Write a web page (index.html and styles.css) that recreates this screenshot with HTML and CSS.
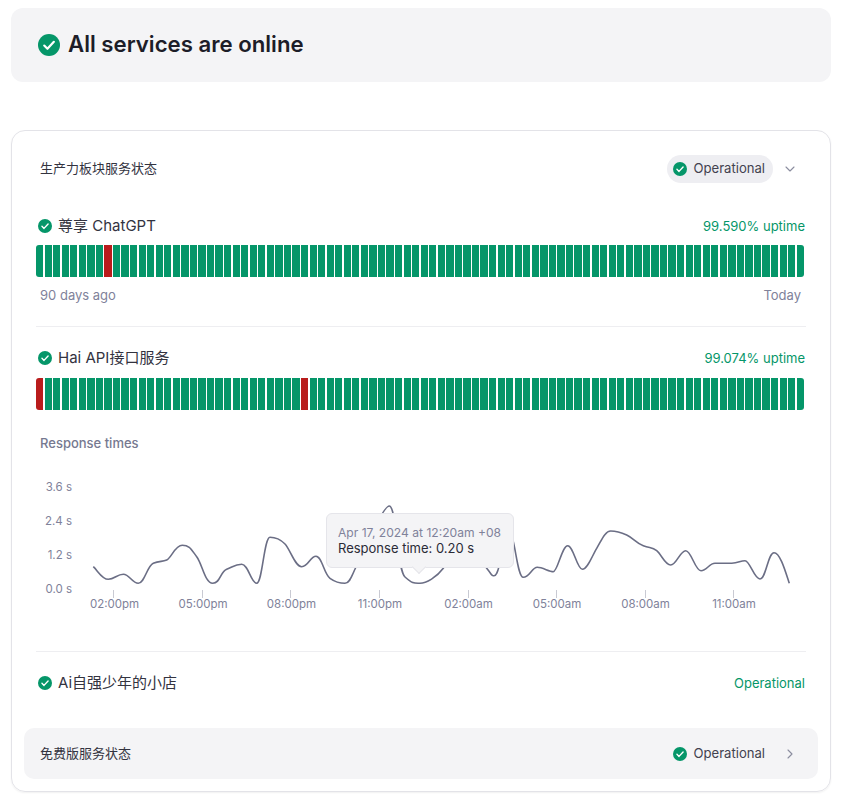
FILE: index.html
```html
<!doctype html>
<html lang="zh">
<head>
<meta charset="utf-8">
<title>Status</title>
<link rel="stylesheet" href="styles.css">
</head>
<body>
<svg class="defs" width="0" height="0">
	<symbol id="ok" viewBox="0 0 24 24">
		<circle cx="12" cy="12" r="12" fill="#059669"/>
		<path d="M6.8 12.6l3.5 3.5 7-7.6" fill="none" stroke="#fff" stroke-width="2.4" stroke-linecap="round" stroke-linejoin="round"/>
	</symbol>
</svg>

<div class="page">
	<div class="banner">
		<svg class="icon-lg"><use href="#ok"/></svg>
		<h1>All services are online</h1>
	</div>

	<div class="card">
		<div class="group-head">
			<span class="group-name">生产力板块服务状态</span>
			<span class="pill"><svg class="icon"><use href="#ok"/></svg><span class="status-text">Operational</span></span>
			<svg class="chev" viewBox="0 0 10 10"><path d="M1 3l4 4 4-4"/></svg>
		</div>

		<div class="service first">
			<div class="service-head">
				<span class="service-name"><svg class="icon"><use href="#ok"/></svg>尊享 ChatGPT</span>
				<span class="uptime">99.590% uptime</span>
			</div>
			<div class="bars">
				<i></i><i></i><i></i><i></i><i></i><i></i><i></i><i></i><i class="down"></i><i></i>
				<i></i><i></i><i></i><i></i><i></i><i></i><i></i><i></i><i></i><i></i>
				<i></i><i></i><i></i><i></i><i></i><i></i><i></i><i></i><i></i><i></i>
				<i></i><i></i><i></i><i></i><i></i><i></i><i></i><i></i><i></i><i></i>
				<i></i><i></i><i></i><i></i><i></i><i></i><i></i><i></i><i></i><i></i>
				<i></i><i></i><i></i><i></i><i></i><i></i><i></i><i></i><i></i><i></i>
				<i></i><i></i><i></i><i></i><i></i><i></i><i></i><i></i><i></i><i></i>
				<i></i><i></i><i></i><i></i><i></i><i></i><i></i><i></i><i></i><i></i>
				<i></i><i></i><i></i><i></i><i></i><i></i><i></i><i></i><i></i><i></i>
			</div>
			<div class="bars-foot"><span>90 days ago</span><span>Today</span></div>
		</div>

		<div class="service second">
			<div class="service-head">
				<span class="service-name"><svg class="icon"><use href="#ok"/></svg>Hai API接口服务</span>
				<span class="uptime">99.074% uptime</span>
			</div>
			<div class="bars">
				<i class="down"></i><i></i><i></i><i></i><i></i><i></i><i></i><i></i><i></i><i></i>
				<i></i><i></i><i></i><i></i><i></i><i></i><i></i><i></i><i></i><i></i>
				<i></i><i></i><i></i><i></i><i></i><i></i><i></i><i></i><i></i><i></i>
				<i></i><i class="down"></i><i></i><i></i><i></i><i></i><i></i><i></i><i></i><i></i>
				<i></i><i></i><i></i><i></i><i></i><i></i><i></i><i></i><i></i><i></i>
				<i></i><i></i><i></i><i></i><i></i><i></i><i></i><i></i><i></i><i></i>
				<i></i><i></i><i></i><i></i><i></i><i></i><i></i><i></i><i></i><i></i>
				<i></i><i></i><i></i><i></i><i></i><i></i><i></i><i></i><i></i><i></i>
				<i></i><i></i><i></i><i></i><i></i><i></i><i></i><i></i><i></i><i></i>
			</div>
			<div class="chart-title">Response times</div>
			<div class="chart">
				<svg viewBox="36 470 770 140" width="770" height="140">
					<g class="y-labels">
						<text x="72" y="491">3.6 s</text>
						<text x="72" y="525">2.4 s</text>
						<text x="72" y="559">1.2 s</text>
						<text x="72" y="593">0.0 s</text>
					</g>
					<path class="ticks" d="M113.5 590v8M202.5 590v8M290.5 590v8M379.5 590v8M468.5 590v8M556.5 590v8M645.5 590v8M733.5 590v8"/>
					<g class="x-labels">
						<text x="114.5" y="608">02:00pm</text>
						<text x="203" y="608">05:00pm</text>
						<text x="291.5" y="608">08:00pm</text>
						<text x="380" y="608">11:00pm</text>
						<text x="468.5" y="608">02:00am</text>
						<text x="557" y="608">05:00am</text>
						<text x="645.5" y="608">08:00am</text>
						<text x="734" y="608">11:00am</text>
					</g>
					<path class="line" d="M93.3 566.7C98 571 102 579.3 108.3 579.3S117 574.3 123.3 574.3S132 583.3 138.3 583.3S147 566 153.3 563.3S162 562 166.7 560S175 545.3 182.3 545.3S191 549 196.7 556.7S205 583.3 212.7 583.3S220 572 226.7 569.3S235 564.3 241.7 564.3S251 583.3 256.7 583.3S264 537.3 270 537.3S280 539 285 544S295 566.7 301.7 566.7S310 556.3 316 556.3S324 574 330 578.3S340 583.3 345 583.3S352 575 356 567S382 506 389.3 506S397 570 405 577S414 583.3 420 583.3S437 577 443.3 568.3S452 540 460 540S480 560 486.7 568.3S491 575.7 494 575.7S498 570 500 563S505 535 510 535S517 577.3 523.3 577.3S532 567.3 537.3 567.3S549 571.7 553.3 571.7S562 545.7 567.7 545.7S577 569.3 582.3 569.3S592 556 596.7 548.3S605 531 610.7 531S620 532 626.7 535S636 543 643.3 545.7S652 547 656.7 550.7S665 565 670.7 565S680 550.7 685.7 550.7S695 570.7 701 570.7S709 563.3 715 563.3S725 563.3 731.7 563.3S740 560.7 745 560.7S754 579 760 579S768 552.7 774 552.7S785 570 789.3 583.3"/>
				</svg>
				<div class="tooltip">
					<div class="tooltip-date">Apr 17, 2024 at 12:20am +08</div>
					<div class="tooltip-value">Response time: 0.20 s</div>
				</div>
			</div>
		</div>

		<div class="service third">
			<div class="service-head">
				<span class="service-name"><svg class="icon"><use href="#ok"/></svg>Ai自强少年的小店</span>
				<span class="uptime">Operational</span>
			</div>
		</div>

		<div class="group-foot">
			<span class="group-name">免费版服务状态</span>
			<span class="foot-status"><svg class="icon"><use href="#ok"/></svg><span class="status-text">Operational</span></span>
			<svg class="chev" viewBox="0 0 10 10"><path d="M3 1l4 4-4 4"/></svg>
		</div>
	</div>
</div>
</body>
</html>
```

FILE: styles.css
```css
* { margin:0; padding:0; box-sizing:border-box; }
body { background:#fff; color:#2b2b36; font-family:Inter, "Noto Sans CJK SC", sans-serif; font-size:14px; }
.defs { position:absolute; }
svg { display:block; flex:none; }

.page { width:820px; margin-left:11px; padding:8px 0 5px; }

.banner { height:74px; display:flex; align-items:center; gap:8px; padding:0 27px; background:#f4f4f6; border-radius:12px; margin-bottom:48px; }
.banner h1 { font-size:22.2px; font-weight:600; line-height:26px; margin-bottom:2px; color:#1d1d28; }
.icon-lg { width:22px; height:22px; }
.icon { width:14px; height:14px; }

.card { height:662px; padding:24px 12px 0; border:1px solid #e3e3e8; border-radius:14px; box-shadow:0 1px 2px rgba(0,0,0,.06); }

.group-head { display:flex; align-items:center; height:28px; padding:0 23px 0 16px; }
.group-name { flex:1; font-size:13px; line-height:18px; margin-bottom:3px; color:#33333f; }
.group-foot .group-name { margin-bottom:1px; }
.pill { display:flex; align-items:center; gap:6px; height:28px; padding:0 8px 0 6px; border-radius:14px; background:#eeeef2; font-size:13px; line-height:16px; color:#42424f; }
.status-text { margin-bottom:2px; font-size:13.1px; }
.chev { width:10px; height:10px; margin-left:12px; fill:none; stroke:#8b8d9f; stroke-width:1.1; stroke-linecap:round; stroke-linejoin:round; }

.service { margin:0 0 0 12px; width:770px; }
.service.first { margin-top:33px; height:111px; border-bottom:1px solid #eeeef1; }
.service.second { margin-top:21px; height:304px; border-bottom:1px solid #eeeef1; }
.service.third { margin-top:21px; }

.service-head { display:flex; justify-content:space-between; align-items:center; height:20px; padding-left:2px; padding-right:1px; }
.service-name { display:flex; align-items:center; gap:6px; font-size:15px; line-height:18px; color:#33333f; }
.uptime { font-size:13px; color:#059669; }

.bars { display:flex; gap:1.3px; width:768.6px; height:32px; margin-top:9px; }
.second .bars { margin-top:10px; }
.bars i { flex:1; background:#059669; }
.bars i:first-child { border-radius:3px 0 0 3px; }
.bars i:last-child { border-radius:0 3px 3px 0; }
.bars .down { background:#b91c1c; }
.bars-foot { display:flex; justify-content:space-between; margin-top:8px; padding:0 5px 0 4px; font-size:13px; line-height:20px; color:#80829a; }

.chart-title { margin-top:23px; padding-left:4px; font-size:13px; font-weight:500; line-height:20px; color:#767990; }
.chart { position:relative; margin-top:17px; }
.chart text { font-family:Inter, sans-serif; font-size:11.5px; fill:#80829a; }
.y-labels text { text-anchor:end; }
.x-labels text { text-anchor:middle; }
.ticks { stroke:#c9cad3; stroke-width:1; fill:none; }
.line { stroke:#6b6e85; stroke-width:1.6; fill:none; }

.tooltip { position:absolute; left:290px; top:43px; width:188px; height:55px; padding:11px 11px 0; background:#f4f4f6; border:1px solid #e5e5ea; border-radius:6px; white-space:nowrap; }
.tooltip::after { content:""; position:absolute; left:87px; bottom:-5px; width:9px; height:9px; background:#f4f4f6; border:solid #e5e5ea; border-width:0 1px 1px 0; transform:rotate(45deg); }
.tooltip-date { font-size:12.1px; line-height:15px; color:#80829a; }
.tooltip-value { font-size:13px; line-height:16px; color:#2b2b36; }

.group-foot { display:flex; align-items:center; height:51px; margin-top:35px; padding:0 23px 0 16px; background:#f4f4f6; border-radius:10px; }
.foot-status { display:flex; align-items:center; gap:6px; font-size:13px; color:#42424f; }
.group-foot .chev { margin-left:20px; }
```
